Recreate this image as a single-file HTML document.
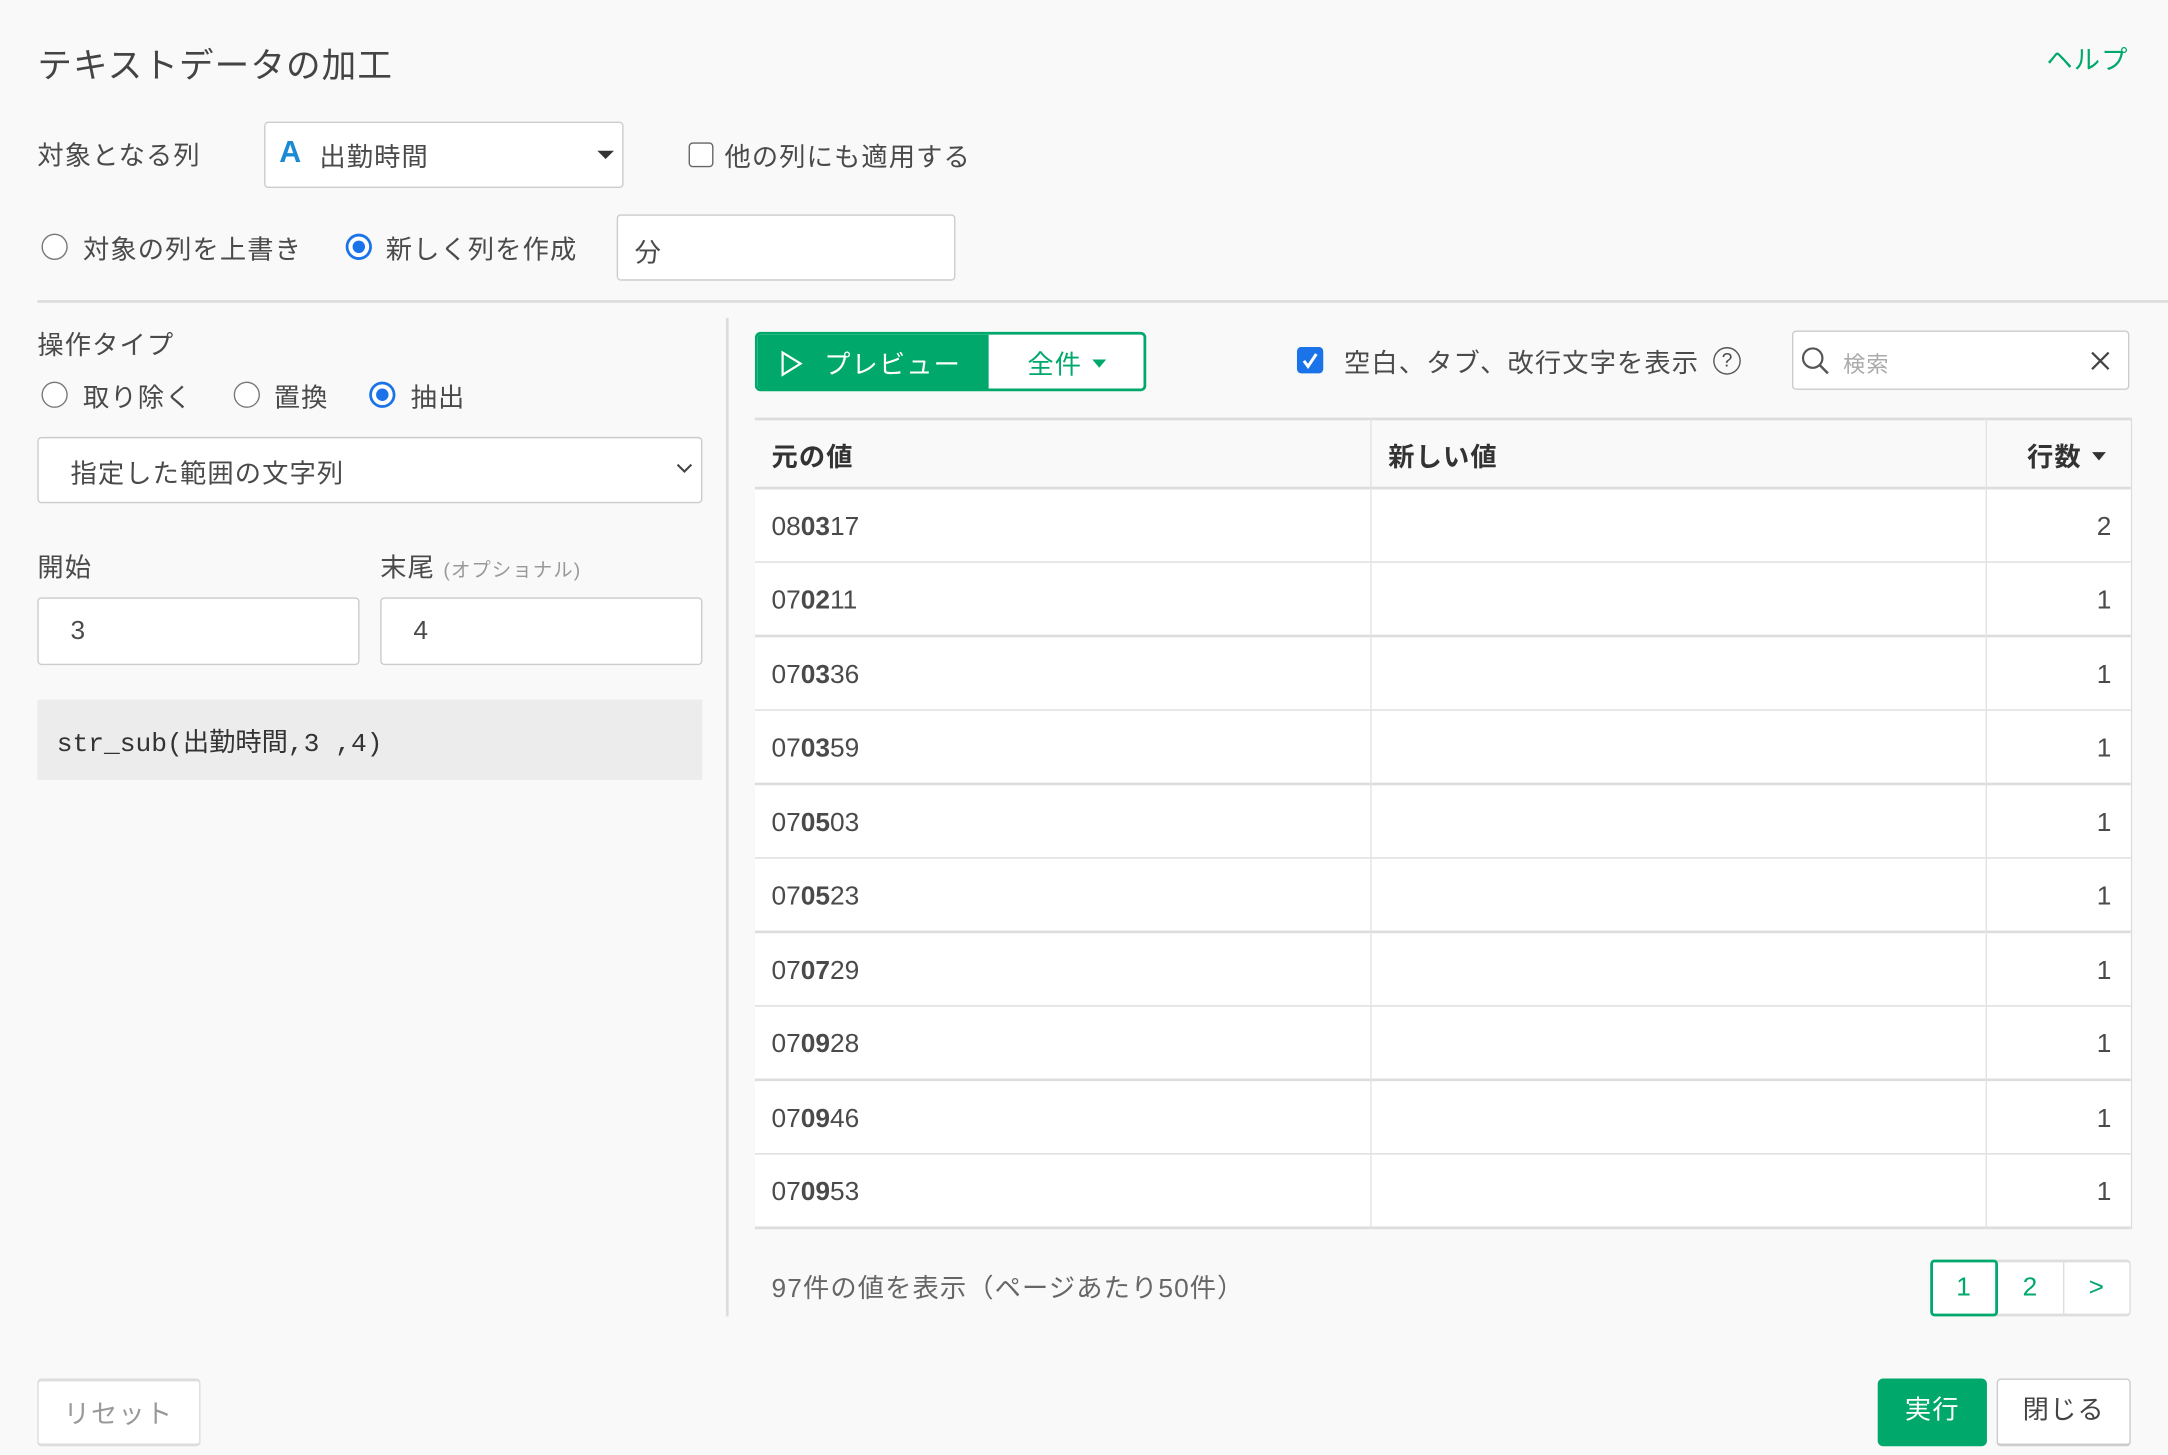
<!DOCTYPE html>
<html><head><meta charset="utf-8"><style>
*{box-sizing:border-box;margin:0;padding:0}
html,body{width:2168px;height:1454px;overflow:hidden;background:#f9f9f9}
#w{position:absolute;left:0;top:0;width:1568px;height:1052px;transform:scale(1.3827);transform-origin:0 0;font-family:"Liberation Sans","Noto Sans CJK JP",sans-serif;color:#4a4a4a;font-size:19px;letter-spacing:0.8px}
.a{position:absolute;white-space:nowrap}
.box{position:absolute;background:#fff;border:1px solid #ccc;border-radius:3px}
.rad{position:absolute;width:19px;height:19px;border:1.5px solid #777;border-radius:50%;background:#fff}
.rad.on{border:2px solid #1a73e8}
.rad.on:after{content:"";position:absolute;left:3px;top:3px;width:9px;height:9px;border-radius:50%;background:#1a73e8}
.row{position:absolute;left:546px;width:995px;height:54px;background:#fff;border-bottom:2px solid #ddd;letter-spacing:0}
.row span{position:absolute;top:17px}
.c1{left:12px}.c3{right:14px}
b{font-weight:bold}
</style></head><body><div id="w">
<div class="a" style="left:27px;top:28px;font-size:25px;color:#444">テキストデータの加工</div>
<div class="a" style="left:1480px;top:29px;font-size:19px;color:#00a86b">ヘルプ</div>

<div class="a" style="left:27px;top:98px">対象となる列</div>
<div class="box" style="left:191px;top:88px;width:260px;height:48px"></div>
<div class="a" style="left:202px;top:97px;font-size:22px;font-weight:bold;color:#1a8ad4">A</div>
<div class="a" style="left:231px;top:99px">出勤時間</div>
<div class="a" style="left:432px;top:109px;width:0;height:0;border-left:6px solid transparent;border-right:6px solid transparent;border-top:6px solid #333"></div>
<div class="a" style="left:498px;top:103px;width:18px;height:18px;border:1.5px solid #666;border-radius:3px;background:#fff"></div>
<div class="a" style="left:524px;top:99px">他の列にも適用する</div>

<div class="rad" style="left:30px;top:169px"></div>
<div class="a" style="left:60px;top:166px">対象の列を上書き</div>
<div class="rad on" style="left:250px;top:169px"></div>
<div class="a" style="left:279px;top:166px">新しく列を作成</div>
<div class="box" style="left:446px;top:155px;width:245px;height:48px"></div>
<div class="a" style="left:459px;top:168px">分</div>
<div class="a" style="left:27px;top:217px;width:1541px;height:2px;background:#ddd"></div>

<div class="a" style="left:27px;top:235px">操作タイプ</div>
<div class="rad" style="left:30px;top:276px"></div>
<div class="a" style="left:60px;top:273px">取り除く</div>
<div class="rad" style="left:169px;top:276px"></div>
<div class="a" style="left:198px;top:273px">置換</div>
<div class="rad on" style="left:267px;top:276px"></div>
<div class="a" style="left:297px;top:273px">抽出</div>
<div class="box" style="left:27px;top:316px;width:481px;height:48px"></div>
<div class="a" style="left:51px;top:328px">指定した範囲の文字列</div>
<svg class="a" style="left:488px;top:334px" width="14" height="10"><path d="M2 2 L7 7 L12 2" fill="none" stroke="#444" stroke-width="1.5"/></svg>
<div class="a" style="left:27px;top:396px">開始</div>
<div class="a" style="left:275px;top:396px">末尾 <span style="font-size:14px;color:#999">(オプショナル)</span></div>
<div class="box" style="left:27px;top:432px;width:233px;height:49px"></div>
<div class="a" style="left:51px;top:446px">3</div>
<div class="box" style="left:275px;top:432px;width:233px;height:49px"></div>
<div class="a" style="left:299px;top:446px">4</div>
<div class="a" style="left:27px;top:506px;width:481px;height:58px;background:#ececec"></div>
<div class="a" style="left:41px;top:522px;font-family:'Liberation Mono','Noto Sans CJK JP',monospace;font-size:19px;color:#333;letter-spacing:0">str_sub(出勤時間,3 ,4)</div>
<div class="a" style="left:525px;top:230px;width:2px;height:722px;background:#ddd"></div>

<div class="a" style="left:546px;top:240px;width:283px;height:43px;border:2px solid #00a86b;border-radius:4px;background:#fff;overflow:hidden">
<div style="position:absolute;left:0;top:0;width:167px;height:100%;background:#00a86b"></div>
<svg style="position:absolute;left:16px;top:11px" width="18" height="20"><path d="M2 2 L15 10 L2 18 Z" fill="none" stroke="#fff" stroke-width="1.6"/></svg>
<div style="position:absolute;left:48px;top:7px;color:#fff;font-size:19px">プレビュー</div>
<div style="position:absolute;left:195px;top:7px;color:#00a86b;font-size:19px">全件</div>
<div style="position:absolute;left:242px;top:18px;border-left:5px solid transparent;border-right:5px solid transparent;border-top:6px solid #00a86b"></div>
</div>
<div class="a" style="left:938px;top:251px;width:19px;height:19px;background:#1a73e8;border-radius:3px"></div>
<svg class="a" style="left:938px;top:251px" width="19" height="19"><path d="M5 10 L8 14 L14 5" fill="none" stroke="#fff" stroke-width="2.2"/></svg>
<div class="a" style="left:972px;top:248px">空白、タブ、改行文字を表示</div>
<div class="a" style="left:1239px;top:251px;width:20px;height:20px;border:1.5px solid #555;border-radius:50%;font-size:14px;text-align:center;line-height:17px;letter-spacing:0">?</div>
<div class="box" style="left:1296px;top:239px;width:244px;height:43px"></div>
<svg class="a" style="left:1301px;top:249px" width="24" height="24"><circle cx="10" cy="10" r="7" fill="none" stroke="#555" stroke-width="1.6"/><path d="M15 15 L21 21" stroke="#555" stroke-width="1.8"/></svg>
<div class="a" style="left:1333px;top:250px;font-size:16px;color:#aaa">検索</div>
<svg class="a" style="left:1512px;top:254px" width="14" height="14"><path d="M1 1 L13 13 M13 1 L1 13" stroke="#444" stroke-width="1.6"/></svg>

<div class="a" style="left:546px;top:302px;width:996px;height:587px;border:2px solid #ddd;border-right-width:1px;background:#fff"></div>
<div class="row" style="top:302px;height:52px;background:#f9f9f9;border-top:2px solid #ddd"></div>
<div class="a" style="left:558px;top:316px;font-weight:bold;color:#333">元の値</div>
<div class="a" style="left:1004px;top:316px;font-weight:bold;color:#333">新しい値</div>
<div class="a" style="left:1466px;top:316px;font-weight:bold;color:#333">行数</div>
<div class="a" style="left:1513px;top:327px;border-left:5px solid transparent;border-right:5px solid transparent;border-top:6px solid #333"></div>

<div class="row" style="top:354px"><span class="c1">08<b>03</b>17</span><span class="c3">2</span></div>
<div class="row" style="top:407px"><span class="c1">07<b>02</b>11</span><span class="c3">1</span></div>
<div class="row" style="top:461px"><span class="c1">07<b>03</b>36</span><span class="c3">1</span></div>
<div class="row" style="top:514px"><span class="c1">07<b>03</b>59</span><span class="c3">1</span></div>
<div class="row" style="top:568px"><span class="c1">07<b>05</b>03</span><span class="c3">1</span></div>
<div class="row" style="top:621px"><span class="c1">07<b>05</b>23</span><span class="c3">1</span></div>
<div class="row" style="top:675px"><span class="c1">07<b>07</b>29</span><span class="c3">1</span></div>
<div class="row" style="top:728px"><span class="c1">07<b>09</b>28</span><span class="c3">1</span></div>
<div class="row" style="top:782px"><span class="c1">07<b>09</b>46</span><span class="c3">1</span></div>
<div class="row" style="top:835px"><span class="c1">07<b>09</b>53</span><span class="c3">1</span></div>
<div class="a" style="left:991px;top:302px;width:1px;height:586px;background:#e3e3e3"></div>
<div class="a" style="left:1436px;top:302px;width:1px;height:586px;background:#e3e3e3"></div>

<div class="a" style="left:558px;top:917px;color:#666">97件の値を表示（ページあたり50件）</div>
<div class="box" style="left:1396px;top:911px;width:145px;height:41px;border-color:#ddd;border-width:2px 1px"></div>
<div class="a" style="left:1396px;top:911px;width:49px;height:41px;border:2px solid #00a86b;border-radius:3px;background:#fff;color:#00a86b;text-align:center;line-height:37px">1</div>
<div class="a" style="left:1492px;top:913px;width:1px;height:37px;background:#ddd"></div>
<div class="a" style="left:1445px;top:911px;width:47px;color:#00a86b;text-align:center;line-height:41px">2</div>
<div class="a" style="left:1493px;top:911px;width:47px;color:#00a86b;text-align:center;line-height:41px">&gt;</div>

<div class="box" style="left:27px;top:997px;width:118px;height:49px;border-color:#ddd;border-width:2px 1px"></div>
<div class="a" style="left:46px;top:1008px;color:#999">リセット</div>
<div class="a" style="left:1358px;top:997px;width:79px;height:49px;background:#00a86b;border-radius:4px;color:#fff;text-align:center;line-height:47px">実行</div>
<div class="box" style="left:1444px;top:997px;width:97px;height:49px;border-color:#ccc;border-width:1px 1px 2px"></div>
<div class="a" style="left:1444px;top:997px;width:97px;text-align:center;line-height:47px;color:#444">閉じる</div>
</div></body></html>
